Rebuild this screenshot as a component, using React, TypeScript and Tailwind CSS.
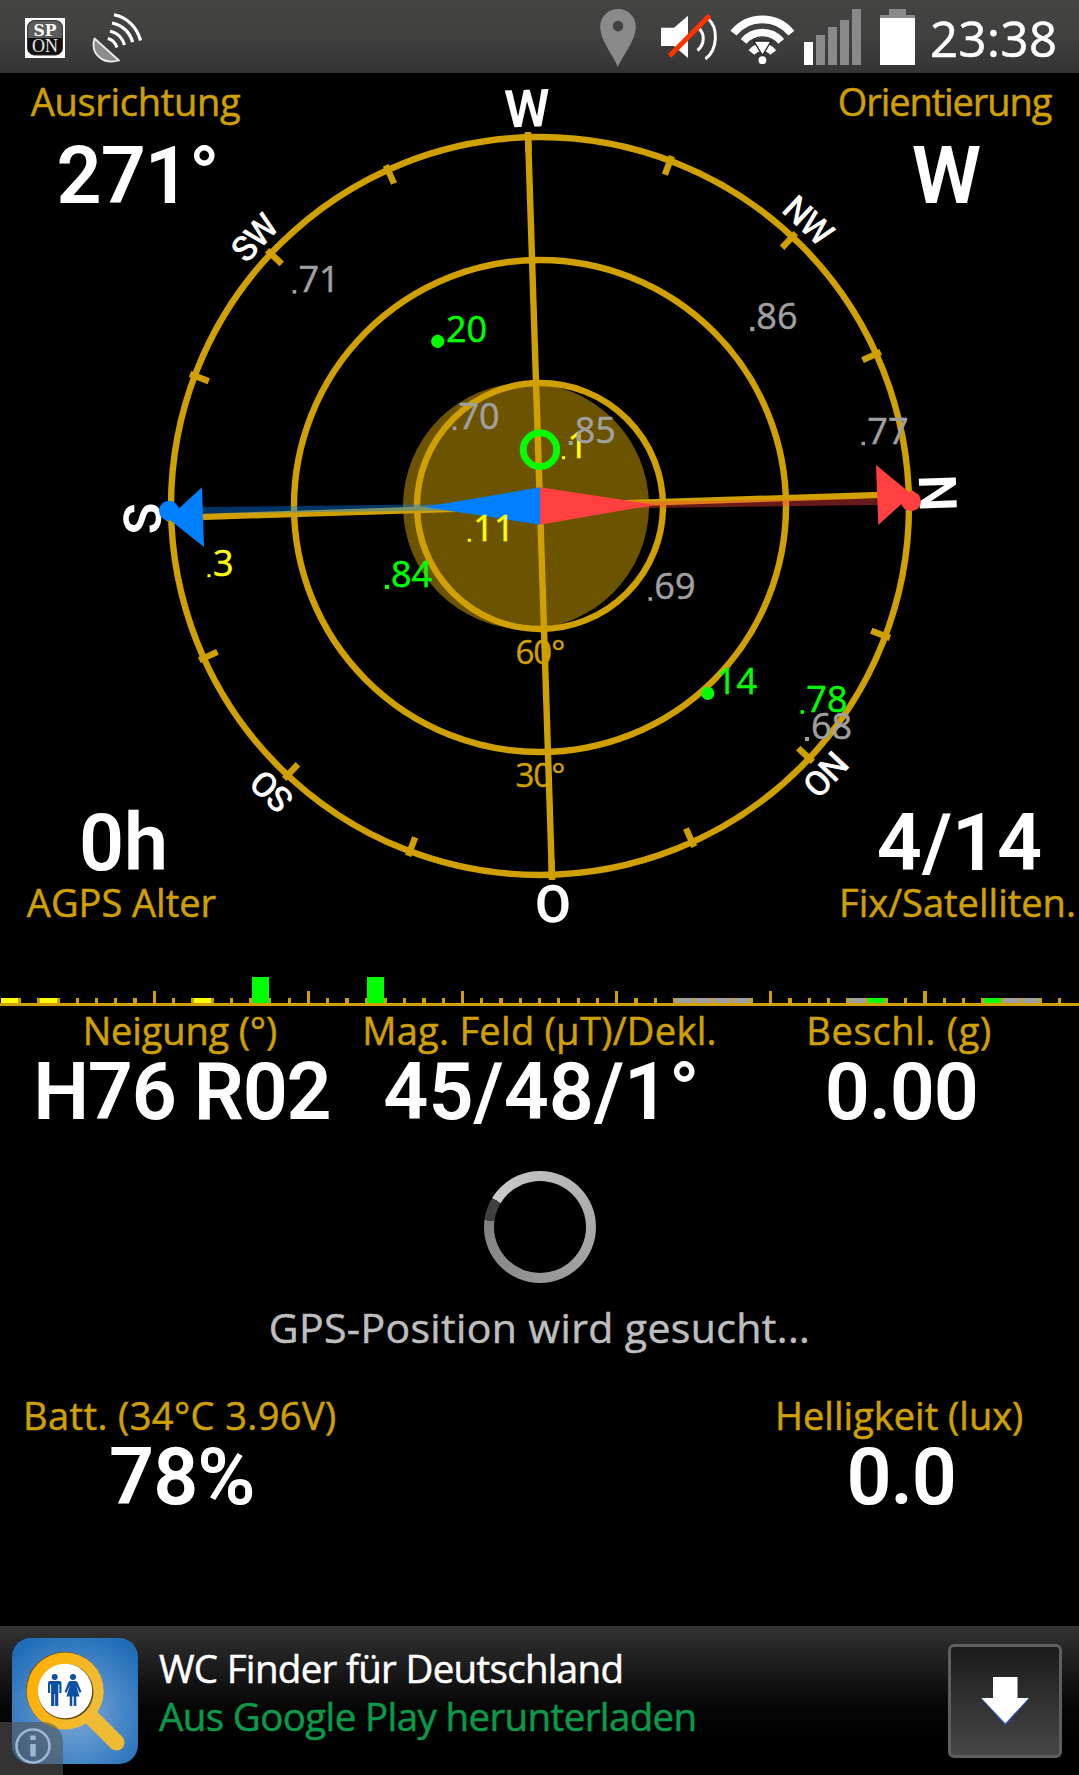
const GOLD = "#cfa000";
const GREEN = "#00ff00";
const YELLOW = "#ffff00";
const GRAY = "#a0a0a0";

// heading plus declination, as the dial is turned
const TILT = -1.85;

const satellites = [
  { id: "71", x: 294.4, y: 291.8, size: 3.6, color: GRAY },
  { id: "20", x: 437.7, y: 341.3, size: 13.2, color: GREEN },
  { id: "70", x: 454.5, y: 428.3, size: 3.6, color: GRAY },
  { id: "1", x: 563.5, y: 457.7, size: 3, color: YELLOW },
  { id: "85", x: 570.7, y: 443, size: 4, color: GRAY },
  { id: "86", x: 752.3, y: 329, size: 4.2, color: GRAY },
  { id: "77", x: 863.3, y: 443.5, size: 3.4, color: GRAY },
  { id: "11", x: 469.3, y: 540.3, size: 3, color: YELLOW },
  { id: "3", x: 209, y: 575.7, size: 3, color: YELLOW },
  { id: "84", x: 387, y: 587, size: 4.2, color: GREEN },
  { id: "69", x: 650.3, y: 599, size: 3.6, color: GRAY },
  { id: "14", x: 707.7, y: 693.3, size: 13.2, color: GREEN },
  { id: "78", x: 802.3, y: 712, size: 3.6, color: GREEN },
  { id: "68", x: 807, y: 739, size: 4, color: GRAY },
];

const directions = [
  { name: "W", angle: 0 },
  { name: "NW", angle: 45 },
  { name: "N", angle: 90 },
  { name: "NO", angle: 135 },
  { name: "O", angle: 180 },
  { name: "SO", angle: 225 },
  { name: "S", angle: 270 },
  { name: "SW", angle: 315 },
];

const bars = [
  { slot: 0, height: 5.5, color: YELLOW },
  { slot: 2, height: 5.5, color: YELLOW },
  { slot: 10, height: 5.5, color: YELLOW },
  { slot: 13, height: 26.5, color: GREEN },
  { slot: 19, height: 26.5, color: GREEN },
  { slot: 35, height: 5.5, color: GRAY },
  { slot: 36, height: 5.5, color: GRAY },
  { slot: 37, height: 5.5, color: GRAY },
  { slot: 38, height: 5.5, color: GRAY },
  { slot: 44, height: 5.5, color: GRAY },
  { slot: 45, height: 5.5, color: GREEN },
  { slot: 51, height: 5.5, color: GREEN },
  { slot: 52, height: 5.5, color: GRAY },
  { slot: 53, height: 5.5, color: GRAY },
];

function StatusBar() {
  return (
    <header className="flex h-[73px] shrink-0 items-start bg-linear-to-b from-[#444443] via-[#40403f] to-[#343434] pl-[25px]">
      {/* SP ON */}
      <svg className="mt-[18px]" width="40" height="40" viewBox="0 0 40 40">
        <rect width="40" height="40" fill="#fff" />
        <rect x="2.5" y="2.5" width="35" height="34.5" rx="7" fill="#111" stroke="#333" />
        <path d="M3 20V9.5a6.5 6.5 0 0 1 6.5-6.5h21a6.5 6.5 0 0 1 6.5 6.5V20Z" fill="#5c5c5c" />
        <text x="20" y="18.3" textAnchor="middle" fontSize="17" fill="#fff" textLength="23" lengthAdjust="spacingAndGlyphs" className="font-['DejaVu_Serif',serif] font-bold">SP</text>
        <text x="20" y="34" textAnchor="middle" fontSize="18" fill="#e8e8e8" textLength="26" lengthAdjust="spacingAndGlyphs" className="font-['Liberation_Serif',serif]">ON</text>
      </svg>
      {/* satellite dish */}
      <svg className="ml-[26px] mt-[12px]" width="52" height="54" viewBox="91 12 52 54" fill="none" stroke="#fff" strokeWidth="3.2">
        <path d="M94.5 38.5C90 54 103 65 119 60.5Z" fill="#8b8b8b" stroke="#ededed" strokeWidth="1.8" strokeLinejoin="round" />
        <path d="M114 14.8C127 17.5 137 27 140.5 40.5" />
        <path d="M112 23C122 25 130 32 132.6 42.2" />
        <path d="M110 31.2C117 32.5 122.5 38 124.5 45" />
        <path d="M107.8 38.5C112 39.5 115.5 43 117 47.5" />
      </svg>
      <div className="flex-1" />
      {/* location pin */}
      <svg className="mt-[8px]" width="38" height="60" viewBox="599 8 38 60">
        <path fillRule="evenodd" d="M618 67C614 56 600.2 41 600.2 26.5A17.8 17.5 0 0 1 635.8 26.5C635.8 41 622 56 618 67ZM618 20.8a5.3 5.3 0 1 0 0 10.6a5.3 5.3 0 1 0 0-10.6Z" fill="#8a8a8a" />
      </svg>
      {/* muted speaker */}
      <svg className="ml-[24px] mt-[12px]" width="58" height="50" viewBox="661 12 58 50" fill="none">
        <path d="M661 27.7H674L688 15.7V58L674 46H661Z" fill="#fff" />
        <path d="M698.5 28C705 33.5 705 44 697.5 50.5M708 18.5C718.5 28 718 49 705.5 59" stroke="#fff" strokeWidth="3" />
        <path d="M709.5 15.5L669.5 56" stroke="#ff3300" strokeWidth="4.8" />
      </svg>
      {/* wifi */}
      <svg className="ml-[10px] mt-[14px]" width="68" height="52" viewBox="729 14 68 52" fill="none" stroke="#fff">
        <path d="M733.4 33.2A37.3 37.3 0 0 1 791.4 33.2" strokeWidth="7.6" />
        <path d="M743.6 41.4A24.2 24.2 0 0 1 781.2 41.4" strokeWidth="7.4" />
        <path d="M751.5 52.5A14 14 0 0 1 773.3 52.5" strokeWidth="7.5" />
        <path d="M753.8 41H771.2L762.5 55.5Z" fill="#fff" stroke="#222" strokeWidth="1.4" />
        <circle cx="762.4" cy="60.2" r="3.9" fill="#fff" stroke="none" />
      </svg>
      {/* cell signal */}
      <div className="ml-[7px] mt-[9px] flex h-[56px] items-end gap-[3px]">
        <div className="h-[23px] w-[9px] bg-white" />
        <div className="h-[30px] w-[9px] bg-[#8a8a8a]" />
        <div className="h-[38px] w-[9px] bg-[#8a8a8a]" />
        <div className="h-[45px] w-[9px] bg-[#8a8a8a]" />
        <div className="h-[56px] w-[9px] bg-[#8a8a8a]" />
      </div>
      {/* battery */}
      <div className="ml-[19px] mt-[9px] flex w-[35px] flex-col items-center">
        <div className="h-[6px] w-[17px] bg-[#8a8a8a]" />
        <div className="h-[3px] w-full bg-[#8a8a8a]" />
        <div className="h-[47px] w-full bg-white" />
      </div>
      <div className="ml-[15px] mt-[8px] w-[149px] text-[49px] leading-[60px] tracking-[0.5px] text-white [-webkit-text-stroke:0.6px]">23:38</div>
    </header>
  );
}

function Compass() {
  return (
    <svg className="col-start-1 row-start-1" width="1079" height="897" viewBox="0 73 1079 897">
      <circle cx="526" cy="506" r="123" fill={GOLD} fillOpacity="0.52" />
      <g fill="none" stroke={GOLD} strokeWidth="6.4">
        <circle cx="540" cy="506" r="369" />
        <circle cx="540" cy="506" r="246" />
        <circle cx="540" cy="506" r="123" />
        <g transform={`rotate(${TILT} 540 506)`}>
          <path d="M540 132V880M170 506H910" />
          {Array.from({ length: 16 }, (_, i) => (
            <path key={i} d="M540 132V152" transform={`rotate(${i * 22.5} 540 506)`} />
          ))}
        </g>
      </g>
      <g fill={GOLD} stroke={GOLD} strokeWidth="0.4" fontSize="33" textAnchor="middle" letterSpacing="-0.9">
        <text x="540" y="663.8">60°</text>
        <text x="540" y="787">30°</text>
      </g>
      <g fill="#fff" textAnchor="middle" className="font-[Roboto,sans-serif]">
        {directions.map(({ name, angle }) => (
          <text
            key={name}
            x="540"
            y="126.5"
            fontSize={name.length > 1 ? 35 : 52}
            letterSpacing={name.length > 1 ? -1.3 : 0}
            className={name.length > 1 ? "font-medium" : "font-semibold"}
            transform={`rotate(${angle + TILT} 540 506)`}
          >
            {name}
          </text>
        ))}
      </g>

      {/* needle */}
      <path d="M169 510.7L540 506.2" stroke="#0080ff" strokeOpacity="0.4" strokeWidth="6.4" />
      <path d="M911 501.3L540 506.2" stroke="#ff4040" strokeOpacity="0.4" strokeWidth="6.4" />
      <g fill="#0080ff">
        <path d="M540 487.3V524.7L424 507Z" />
        <path d="M202 487.3L204 547L168 518.5Z" />
        <circle cx="169" cy="510.7" r="10" />
      </g>
      <g fill="#ff4040">
        <path d="M540 487.3V524.7L655 504.7Z" />
        <path d="M876 465L878.3 525L912 494.5Z" />
        <circle cx="911" cy="501.3" r="10" />
      </g>
      <circle cx="540" cy="449.7" r="16.8" fill="none" stroke={GREEN} strokeWidth="6.8" />

      {satellites.map(({ id, x, y, size, color }) => (
        <g key={id} fill={color}>
          <rect x={x - size / 2} y={y - size / 2} width={size} height={size} rx={size > 10 ? size / 2 : 0} />
          <text x={x + (size > 10 ? 8.3 : 4)} y={y + 0.4} fontSize="36" stroke={color} strokeWidth="0.5">{id}</text>
        </g>
      ))}
    </svg>
  );
}

function SignalRuler() {
  const step = 1079 / 56;
  return (
    <svg className="block shrink-0" width="1079" height="36" viewBox="0 0 1079 36" shapeRendering="crispEdges">
      {Array.from({ length: 55 }, (_, i) => {
        const major = (i + 1) % 8 === 0;
        return (
          <rect key={i} x={(i + 1) * step - 1.5} y={major ? 21 : 28} width="3.2" height={major ? 13 : 6} fill={GOLD} />
        );
      })}
      {bars.map(({ slot, height, color }) => (
        <rect key={slot} x={Math.round(slot * step + 1.3)} y={33.5 - height} width="17" height={height} fill={color} />
      ))}
      <rect y="33" width="1079" height="3" fill={GOLD} />
    </svg>
  );
}

function Label({ text, className = "" }: { text: string; className?: string }) {
  return (
    <div className={`h-10 whitespace-nowrap text-[38px] leading-10 text-[#cfa000] [-webkit-text-stroke:0.5px] ${className}`}>
      {text}
    </div>
  );
}

function Value({ text, className = "" }: { text: string; className?: string }) {
  return (
    <div className={`h-20 whitespace-nowrap pl-1 font-[Roboto,sans-serif] text-[79px] leading-20 font-semibold text-white ${className}`}>
      {text}
    </div>
  );
}

function AdBanner() {
  return (
    <footer className="relative flex h-[149px] shrink-0 items-start bg-linear-to-b from-[#333333] to-black to-90% pl-3 pr-[17px]">
      <svg className="mt-3 shrink-0" width="126" height="126" viewBox="0 0 126 126">
        <defs>
          <radialGradient id="sky" cx="0.5" cy="0.6" r="0.68">
            <stop offset="0" stopColor="#7ba9d8" />
            <stop offset="1" stopColor="#1f6cb8" />
          </radialGradient>
          <linearGradient id="lens" x1="0" x2="1" y1="0.3" y2="0.7">
            <stop offset="0" stopColor="#ffb000" />
            <stop offset="1" stopColor="#efbd3c" />
          </linearGradient>
        </defs>
        <rect width="126" height="126" rx="19" fill="url(#sky)" />
        <path d="M80 80L104.5 104.5" stroke="#efbb35" strokeWidth="16" strokeLinecap="round" />
        <circle cx="52.5" cy="52.2" r="38.5" fill="#6b5420" />
        <circle cx="53.2" cy="53" r="38.5" fill="url(#lens)" />
        <circle cx="53.7" cy="53.8" r="27.8" fill="#5e4513" />
        <circle cx="53" cy="53" r="27.2" fill="#fff" />
        <g fill="#0b50a5">
          <circle cx="42.7" cy="39" r="3" />
          <path d="M38 43h9.5q2 0 2 2v10h-2.2v-8.5h-1V68h-3.2V56h-.8v12h-3.2V46.5h-1V55H36V45q0-2 2-2Z" />
          <circle cx="61" cy="39" r="3" />
          <path d="M58.500 43h5q1.800 0 2.300 1.800L69.500 54l-2 .8-3.500-8 3.500 11.700h-3.200V68h-2.600v-9.500h-1.400V68h-2.600v-9.500h-3.200L58 46.800l-3.500 8-2-.8 3.700-9.200q.5-1.800 2.300-1.800Z" />
        </g>
      </svg>
      <div className="absolute bottom-0 left-0 flex h-[53px] w-[63px] rounded-tr-[20px] bg-[#55555599] pl-[14px] pt-[5px]">
        <svg width="38" height="38" viewBox="0 0 38 38" fill="none" stroke="#9db7d2" strokeWidth="2.6">
          <circle cx="19" cy="19" r="16.5" />
          <path d="M19 17V29.5" strokeWidth="5.5" />
          <path d="M19 8.5V13" strokeWidth="5.5" />
        </svg>
      </div>
      <div className="ml-[21px] mt-[18px] flex-1 whitespace-nowrap text-[38.5px] leading-12 [-webkit-text-stroke:0.5px]">
        <div className="tracking-[-0.7px] text-white">WC Finder für Deutschland</div>
        <div className="tracking-[-0.62px] text-[#0a9a4a]">Aus Google Play herunterladen</div>
      </div>
      <button className="mt-[18px] h-[114px] w-[114px] rounded-[6px] border-3 border-[#5f5d5e] bg-linear-to-b from-[#1b1b1b] to-[#484747]">
        <svg className="-ml-[3px] -mt-[3px]" width="114" height="114" viewBox="0 0 114 114">
          <path d="M33.4 55L57.3 81.5L80.8 55Z" fill="#2f55c4" />
          <path d="M45 33H69.5V54H80.8L57.3 79.2L33.4 54H45Z" fill="#fff" />
        </svg>
      </button>
    </footer>
  );
}

export default function App() {
  return (
    <div className="flex h-[1775px] w-[1079px] flex-col overflow-hidden bg-black font-['Open_Sans',sans-serif]">
      <StatusBar />

      <section className="grid h-[897px] shrink-0">
        <Compass />
        <div className="col-start-1 row-start-1 flex flex-col justify-between pb-12 pt-2 text-center">
          <div className="flex justify-between">
            <div className="w-[271px]">
              <Label text="Ausrichtung" className="tracking-[-0.3px]" />
              <Value text="271°" className="mt-[15px] tracking-[-1px]" />
            </div>
            <div className="w-[269px]">
              <Label text="Orientierung" className="tracking-[-1.1px]" />
              <Value text="W" className="mt-[15px]" />
            </div>
          </div>
          <div className="flex justify-between">
            <div className="w-[243px]">
              <Value text="0h" />
              <Label text="AGPS Alter" className="-mt-px" />
            </div>
            <div className="w-[243px]">
              <Value text="4/14" />
              <Label text="Fix/Satelliten." className="-mt-px" />
            </div>
          </div>
        </div>
      </section>

      <SignalRuler />

      <section className="mt-1 grid grid-cols-3 text-center">
        <div>
          <Label text="Neigung (°)" className="tracking-[-0.15px]" />
          <Value text="H76 R02" className="mt-0.5 tracking-[-1.3px]" />
        </div>
        <div>
          <Label text="Mag. Feld (µT)/Dekl." className="tracking-[0.3px]" />
          <Value text="45/48/1°" className="mt-0.5" />
        </div>
        <div>
          <Label text="Beschl. (g)" className="tracking-[0.7px]" />
          <Value text="0.00" className="mt-0.5 tracking-[-1.3px]" />
        </div>
      </section>

      <section className="mt-[39px] flex flex-col items-center">
        <div className="flex h-28 w-28 items-center justify-center rounded-full bg-[conic-gradient(from_301.5deg,#cacaca_0deg,#adadad_130deg,#969696_240deg,#808080_335.5deg,#404040_335.5deg,#404040_360deg)]">
          <div className="h-[92px] w-[92px] rounded-full bg-black" />
        </div>
        <div className="mt-6 h-10 text-[41px] leading-10 tracking-[0.37px] text-[#bebebe] [-webkit-text-stroke:0.5px]">
          GPS-Position wird gesucht...
        </div>
      </section>

      <section className="mt-12 grid grid-cols-3 text-center">
        <div>
          <Label text="Batt. (34°C 3.96V)" className="tracking-[0.4px]" />
          <Value text="78%" className="mt-0.5 tracking-[-1px]" />
        </div>
        <div className="col-start-3">
          <Label text="Helligkeit (lux)" />
          <Value text="0.0" className="mt-0.5 tracking-[-1.2px]" />
        </div>
      </section>

      <div className="flex-1" />
      <AdBanner />
    </div>
  );
}
